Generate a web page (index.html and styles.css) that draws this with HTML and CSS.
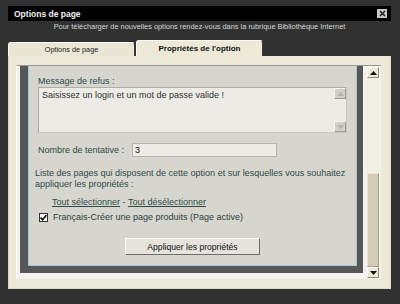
FILE: index.html
```html
<!DOCTYPE html>
<html>
<head>
  <meta charset="UTF-8">
  <title>Options de page</title>
  <link rel="stylesheet" href="styles.css">
</head>
<body>
  <div class="window">
    <div class="title-bar">
      <span class="title">Options de page</span>
      <button class="close-btn" title="Fermer">
        <svg width="7" height="7" viewBox="0 0 7 7"><path d="M1 1L6 6M6 1L1 6" stroke="#222" stroke-width="1.6"/></svg>
      </button>
    </div>

    <div class="subtitle">Pour télécharger de nouvelles options rendez-vous dans la rubrique Bibliothèque Internet</div>

    <div class="tabs">
      <div class="tab">Options de page</div>
      <div class="tab active">Propriétés de l'option</div>
    </div>

    <div class="panel">
      <div class="scroll-box">
        <div class="viewport">
          <div class="frame">
            <div class="content">
              <div class="field-label">Message de refus :</div>
              <div class="text-area">
                <div class="text-value">Saisissez un login et un mot de passe valide !</div>
                <div class="mini-scroll">
                  <div class="mini-btn">
                    <svg width="7" height="4" viewBox="0 0 7 4"><path d="M0 4L3.5 0L7 4Z" fill="#b4b2aa"/></svg>
                  </div>
                  <div class="mini-btn">
                    <svg width="7" height="4" viewBox="0 0 7 4"><path d="M0 0L3.5 4L7 0Z" fill="#b4b2aa"/></svg>
                  </div>
                </div>
              </div>

              <div class="field-row">
                <span class="field-label">Nombre de tentative :</span>
                <div class="text-input">3</div>
              </div>

              <p class="pages-text">Liste des pages qui disposent de cette option et sur lesquelles vous souhaitez appliquer les propriétés :</p>

              <div class="select-links">
                <a href="#">Tout sélectionner</a> - <a href="#">Tout désélectionner</a>
              </div>

              <label class="check-row">
                <span class="check-box">
                  <svg width="7" height="7" viewBox="0 0 7 7"><path d="M0.5 3.5L2.6 5.8L6.5 1" fill="none" stroke="#111" stroke-width="1.6"/></svg>
                </span>
                Français-Créer une page produits (Page active)
              </label>

              <div class="actions">
                <button class="apply-btn">Appliquer les propriétés</button>
              </div>
            </div>
          </div>
        </div>

        <div class="scrollbar">
          <div class="scroll-btn">
            <svg width="7" height="4" viewBox="0 0 7 4"><path d="M0 4L3.5 0L7 4Z" fill="#111"/></svg>
          </div>
          <div class="scroll-track"></div>
          <div class="scroll-thumb"></div>
          <div class="scroll-btn">
            <svg width="7" height="4" viewBox="0 0 7 4"><path d="M0 0L3.5 4L7 0Z" fill="#111"/></svg>
          </div>
        </div>
      </div>
    </div>
  </div>
</body>
</html>
```

FILE: styles.css
```css
* {
  margin: 0;
  padding: 0;
  box-sizing: border-box;
}

body {
  font-family: 'Liberation Sans', Arial, sans-serif;
  background: #313131;
  width: 400px;
  height: 304px;
  overflow: hidden;
}

.window {
  padding: 6px 9px 0 8px;
}

.title-bar {
  background: #000;
  height: 15px;
  display: flex;
  align-items: center;
  justify-content: space-between;
  padding: 0 4px 0 6px;
}

.title {
  color: #f2f2f2;
  font-size: 8.5px;
  font-weight: bold;
}

.close-btn {
  width: 10px;
  height: 9px;
  background: #c9c9c9;
  border: none;
  display: flex;
  align-items: center;
  justify-content: center;
}

.subtitle {
  color: #d6d6d6;
  font-size: 7.4px;
  line-height: 12px;
  text-align: center;
}

.tabs {
  display: flex;
  align-items: flex-end;
  margin-top: 7px;
  height: 16px;
}

.tab {
  width: 127px;
  height: 14px;
  background: #e9e6d6;
  border: 1px solid #fbfaf3;
  border-bottom: none;
  border-right-color: #3a3a3a;
  border-radius: 3px 3px 0 0;
  color: #222;
  font-size: 7.3px;
  line-height: 13px;
  text-align: center;
}

.tab.active {
  width: 127px;
  height: 16px;
  margin-left: 1px;
  background: #ece9d8;
  font-size: 8px;
  font-weight: bold;
  line-height: 15px;
  color: #111;
}

.panel {
  background: #ece9d8;
  border: 1px solid #dedbcb;
  border-top: none;
  padding: 9px 9px 9px 7px;
}

.scroll-box {
  display: flex;
  height: 214px;
  background: #f3f2ec;
  border-top: 1px solid #9a9a94;
  border-left: 1px solid #fdfdf8;
}

.viewport {
  flex: 1;
  overflow: hidden;
  padding: 0 3px 5px 3px;
}

.frame {
  border: solid #575757;
  border-width: 0 6px 7px 8px;
}

.content {
  background: #d7d6ce;
  border: 1px solid #a9c6d8;
  border-top: none;
  padding: 10px 9px 10px 9px;
  color: #2e4a48;
  font-size: 9px;
  line-height: 11px;
}

.text-area {
  display: flex;
  height: 46px;
  background: #ecebe5;
  border: 1px solid #aeada6;
  border-right-color: #c8c7c0;
  border-bottom-color: #c8c7c0;
}

.text-value {
  flex: 1;
  color: #333;
  padding: 2px 3px;
}

.mini-scroll {
  display: flex;
  flex-direction: column;
  justify-content: space-between;
}

.mini-btn {
  width: 12px;
  height: 11px;
  background: #d3d0c6;
  border: 1px solid #f4f3ee;
  border-right-color: #9c9a92;
  border-bottom-color: #9c9a92;
  display: flex;
  align-items: center;
  justify-content: center;
}

.field-row {
  display: flex;
  align-items: center;
  margin-top: 10px;
  height: 14px;
}

.text-input {
  width: 145px;
  height: 14px;
  margin-left: 8px;
  background: #ecebe5;
  border: 1px solid #b6b5ae;
  color: #222;
  padding: 0 2px;
  line-height: 12px;
}

.pages-text {
  margin-top: 11px;
  margin-left: -3px;
}

.select-links {
  margin-top: 7px;
  padding-left: 14px;
}

.select-links a {
  color: #2e4a48;
}

.check-row {
  display: flex;
  align-items: center;
  gap: 5px;
  margin-top: 4px;
  padding-left: 1px;
  color: #2b3e3c;
}

.check-box {
  width: 9px;
  height: 9px;
  background: #fff;
  border: 1px solid #333;
  display: flex;
  align-items: center;
  justify-content: center;
}

.actions {
  display: flex;
  justify-content: center;
  margin-top: 15px;
}

.apply-btn {
  width: 135px;
  height: 17px;
  font-family: 'Liberation Sans', Arial, sans-serif;
  font-size: 8.6px;
  color: #111;
  background: #e5e3dc;
  border: 1px solid #fbfbf8;
  border-right-color: #6d6d6a;
  border-bottom-color: #6d6d6a;
}

.scrollbar {
  width: 15px;
  padding: 1px 2px 1px 1px;
  display: flex;
  flex-direction: column;
}

.scroll-btn {
  height: 11px;
  background: #ece9d8;
  border: 1px solid #fbfaf4;
  border-right-color: #8a877c;
  border-bottom-color: #8a877c;
  display: flex;
  align-items: center;
  justify-content: center;
}

.scroll-track {
  height: 95px;
  background: #f1efe4;
}

.scroll-thumb {
  flex: 1;
  background: #d3cbb6;
  border: 1px solid #ebe6d8;
  border-right-color: #a39c88;
  border-bottom-color: #a39c88;
}
```
